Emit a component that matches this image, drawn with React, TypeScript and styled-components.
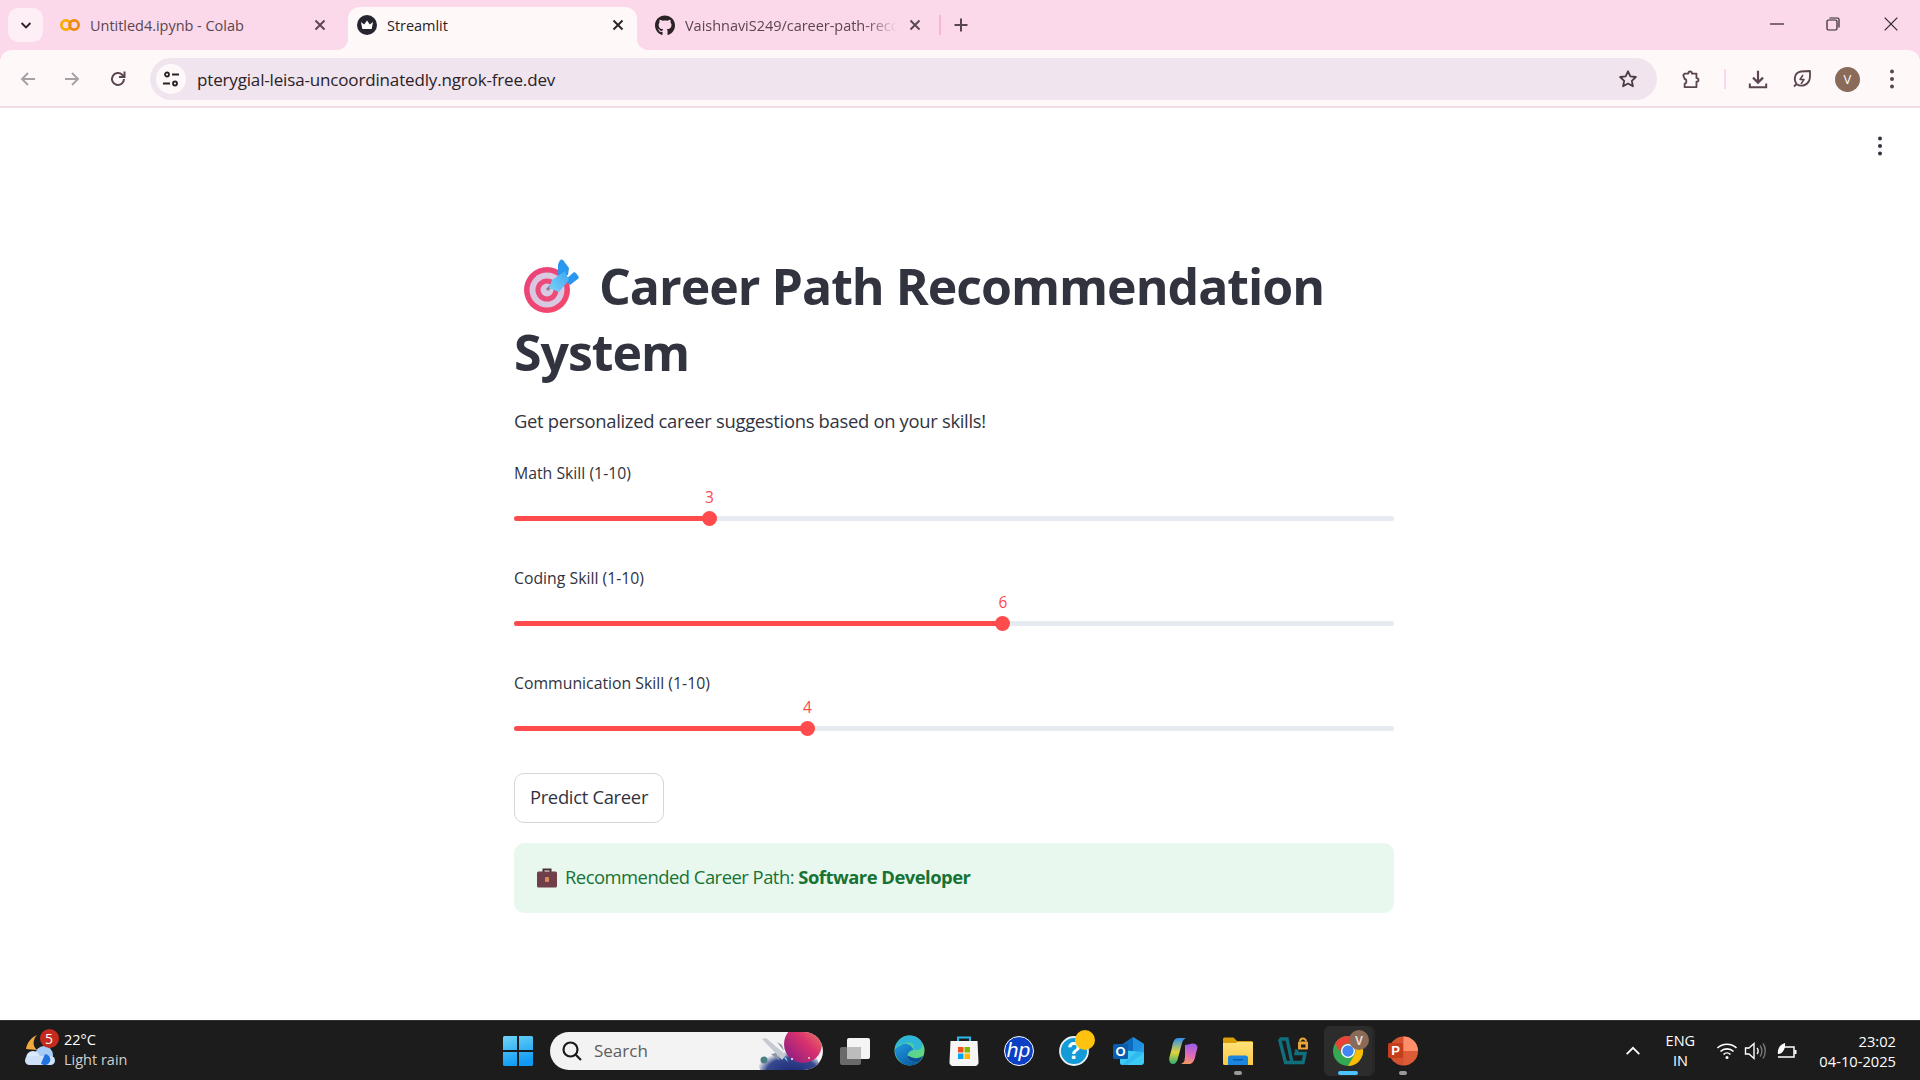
import { FC, ReactNode } from 'react'
import styled, { createGlobalStyle } from 'styled-components'
import { FaGithub } from 'react-icons/fa'

const GlobalStyle = createGlobalStyle`
  html, body {
    margin: 0;
    padding: 0;
    height: 100%;
    overflow: hidden;
    background: #fff;
  }
  * { box-sizing: border-box; }
`

const BODY_FONT = `"Open Sans", "Noto Sans", sans-serif`
const UI_FONT = `"Open Sans", "Noto Sans", sans-serif`

const Screen = styled.div`
  width: 1920px;
  height: 1080px;
  display: flex;
  flex-direction: column;
  overflow: hidden;
  background: #fbd8ea;
  font-family: ${BODY_FONT};
`

/* ---------- browser chrome ---------- */

const TabStrip = styled.div`
  height: 50px;
  flex: none;
  display: flex;
  align-items: flex-end;
  background: #fbd8ea;
  font-family: ${UI_FONT};
`

const TabListButton = styled.div`
  width: 35px;
  height: 34px;
  margin: 0 7px 8px 8px;
  display: flex;
  align-items: center;
  justify-content: center;
  background: #feeef6;
  border-radius: 10px;
`

const Tab = styled.div<{ $width: number; $left: number; $right: number; $active?: boolean }>`
  position: relative;
  width: ${(p) => p.$width}px;
  height: 43px;
  padding: 0 ${(p) => p.$right}px 7px ${(p) => p.$left}px;
  display: flex;
  align-items: center;
  border-radius: 12px 12px 0 0;
  background: ${(p) => (p.$active ? '#fff8f8' : 'transparent')};
  color: ${(p) => (p.$active ? '#2b2226' : '#5a4650')};
  font-size: 14.5px;
  letter-spacing: -0.03px;

  ${(p) =>
    p.$active &&
    `
    &::before, &::after {
      content: '';
      position: absolute;
      bottom: 0;
      width: 12px;
      height: 12px;
    }
    &::before {
      left: -12px;
      background: radial-gradient(circle at 0 0, transparent 12px, #fff8f8 12.5px);
    }
    &::after {
      right: -12px;
      background: radial-gradient(circle at 100% 0, transparent 12px, #fff8f8 12.5px);
    }
  `}
`

const Favicon = styled.span`
  width: 20px;
  height: 20px;
  flex: none;
  display: flex;
  align-items: center;
  justify-content: center;
`

const TabTitle = styled.span<{ $fade?: boolean }>`
  flex: 1;
  min-width: 0;
  margin-left: 10px;
  white-space: nowrap;
  overflow: hidden;
  ${(p) =>
    p.$fade &&
    `
    margin-right: 8px;
    -webkit-mask-image: linear-gradient(to right, #000 85%, transparent 100%);
    mask-image: linear-gradient(to right, #000 85%, transparent 100%);
  `}
`

const TabClose = styled.span`
  width: 20px;
  height: 20px;
  flex: none;
  display: flex;
  align-items: center;
  justify-content: center;
`

const TabDivider = styled.span`
  width: 2px;
  height: 20px;
  margin: 0 0 15px 12px;
  background: #f5b6d4;
`

const NewTab = styled.span`
  width: 20px;
  height: 20px;
  margin: 0 0 15px 10px;
  display: flex;
  align-items: center;
  justify-content: center;
`

const WindowControls = styled.div`
  margin-left: auto;
  height: 50px;
  display: flex;
  align-items: flex-start;
  padding: 14px 19px 0 0;
  gap: 36px;
`

const WindowButton = styled.span<{ $margin?: number }>`
  width: 20px;
  height: 20px;
  margin-left: ${(p) => p.$margin ?? 0}px;
  display: flex;
  align-items: center;
  justify-content: center;
`

const Toolbar = styled.div`
  height: 58px;
  flex: none;
  display: flex;
  align-items: center;
  padding: 2px 18px 0 18px;
  background: #fff8f8;
  border-bottom: 2px solid #f2dbe6;
  border-radius: 12px 12px 0 0;
`

const NavIcon = styled.span<{ $margin?: number }>`
  width: 20px;
  height: 20px;
  flex: none;
  margin-left: ${(p) => p.$margin ?? 0}px;
  display: flex;
  align-items: center;
  justify-content: center;
`

const Omnibox = styled.div`
  width: 1507px;
  height: 42px;
  flex: none;
  margin: 0 0 0 22px;
  padding: 0 19px 0 6px;
  display: flex;
  align-items: center;
  border-radius: 21px;
  background: #f0e4ee;
`

const SiteInfo = styled.span`
  width: 30px;
  height: 30px;
  flex: none;
  border-radius: 50%;
  background: #fff8f8;
  display: flex;
  align-items: center;
  justify-content: center;
`

const Url = styled.span`
  flex: 1;
  margin-left: 11px;
  font-family: ${UI_FONT};
  font-size: 17px;
  letter-spacing: -0.16px;
  color: #2b2226;
`

const ToolbarDivider = styled.span`
  width: 2px;
  height: 20px;
  flex: none;
  margin-left: 23px;
  background: #fbd8ea;
`

const Avatar = styled.span`
  width: 25px;
  height: 25px;
  flex: none;
  margin-left: 23px;
  border-radius: 50%;
  background: #8a6a58;
  color: #fff;
  font-family: ${UI_FONT};
  font-size: 13px;
  display: flex;
  align-items: center;
  justify-content: center;
`

/* ---------- streamlit page ---------- */

const Page = styled.main`
  position: relative;
  flex: 1;
  min-height: 0;
  background: #fff;
  color: #31333f;
`

const PageMenu = styled.span`
  position: absolute;
  top: 28px;
  right: 30px;
  width: 20px;
  height: 20px;
  display: flex;
  align-items: center;
  justify-content: center;
`

const Column = styled.div`
  width: 880px;
  margin: 0 0 0 514px;
  padding-top: 145px;
`

const Title = styled.h1`
  margin: 0;
  font-size: 50px;
  font-weight: 700;
  line-height: 66px;
  letter-spacing: -1px;
  color: #31333f;
`

const TitleEmoji = styled.span`
  display: inline-block;
  width: 58px;
  height: 56px;
  margin: 0 19px 0 8px;
  vertical-align: -9px;

  svg {
    display: block;
  }
`

const Lead = styled.p`
  margin: 20px 0 0;
  font-size: 18.4px;
  line-height: 32px;
  letter-spacing: -0.3px;
`

const SliderList = styled.div`
  margin-top: 23px;
  display: flex;
  flex-direction: column;
  gap: 39px;
`

const Field = styled.div`
  height: 66px;
`

const FieldLabel = styled.div`
  height: 26px;
  font-size: 15.8px;
  line-height: 26px;
`

const TrackArea = styled.div`
  position: relative;
  height: 16px;
  margin-top: 24px;
  display: flex;
  align-items: center;
`

const Track = styled.div`
  width: 100%;
  height: 5px;
  border-radius: 3px;
  background: #e6eaf1;
  overflow: hidden;
`

const TrackFill = styled.div`
  height: 100%;
  background: #ff4b4b;
`

const Thumb = styled.div`
  position: absolute;
  top: 0.5px;
  width: 15px;
  height: 15px;
  margin-left: -7.5px;
  border-radius: 50%;
  background: #ff4b4b;
`

const ThumbValue = styled.div`
  position: absolute;
  top: -23px;
  width: 30px;
  margin-left: -15px;
  text-align: center;
  font-size: 15.5px;
  line-height: 20px;
  color: #ff4b4b;
`

const PredictButton = styled.button`
  display: block;
  width: 150px;
  height: 50px;
  margin-top: 37px;
  padding: 0 0 4px;
  border: 1px solid #d5d6d9;
  border-radius: 10px;
  background: #fff;
  color: #31333f;
  font-family: ${BODY_FONT};
  font-size: 18.4px;
  letter-spacing: -0.3px;
`

const SuccessBox = styled.div`
  height: 70px;
  margin-top: 20px;
  padding: 0 22px;
  display: flex;
  align-items: center;
  gap: 7px;
  border-radius: 10px;
  background: #e8f8ee;
  color: #177233;
  font-size: 18.4px;
  letter-spacing: -0.5px;

  span {
    margin-bottom: 4px;
  }

  strong {
    font-weight: 700;
  }
`

/* ---------- windows taskbar ---------- */

const Taskbar = styled.footer`
  height: 60px;
  flex: none;
  display: flex;
  align-items: center;
  background: #1c1c1c;
  border-top: 1px solid #333;
  color: #fff;
  font-family: ${UI_FONT};
`

const Weather = styled.div`
  width: 503px;
  flex: none;
  padding-left: 24px;
  display: flex;
  align-items: center;
  gap: 8px;
`

const WeatherIcon = styled.span`
  position: relative;
  width: 32px;
  height: 34px;
  display: block;
`

const Badge = styled.span`
  position: absolute;
  top: -5px;
  left: 15.5px;
  width: 19px;
  height: 19px;
  border-radius: 50%;
  background: #c42b1c;
  color: #fff;
  font-size: 14px;
  line-height: 19px;
  text-align: center;
`

const WeatherText = styled.div`
  margin-top: -2px;
  font-size: 14.5px;
  line-height: 20px;

  span {
    display: block;
    color: #cfcfcf;
  }
`

const StartButton = styled.span`
  width: 30px;
  height: 30px;
  flex: none;
  display: block;
`

const SearchBox = styled.div`
  position: relative;
  width: 273px;
  height: 38px;
  flex: none;
  margin-left: 17px;
  padding-left: 11px;
  display: flex;
  align-items: center;
  gap: 11px;
  overflow: hidden;
  border-radius: 19px;
  background: #f3f3f3;
  color: #5d5d5d;
  font-size: 17px;
`

const SearchArt = styled.span`
  position: absolute;
  top: 0;
  right: 0;
  width: 64px;
  height: 38px;
`

const AppIcons = styled.div`
  margin-left: 4.5px;
  display: flex;
  align-items: center;
`

const AppSlot = styled.div<{ $active?: boolean }>`
  position: relative;
  width: 54.8px;
  height: 50px;
  display: flex;
  align-items: center;
  justify-content: center;

  ${(p) =>
    p.$active &&
    `
    &::before {
      content: '';
      position: absolute;
      left: 3px;
      top: 0;
      width: 48px;
      height: 50px;
      border-radius: 6px;
      background: #2c2c2c;
      box-shadow: 3px 0 0 #262626;
    }
  `}

  svg {
    position: relative;
  }
`

const RunningDot = styled.span<{ $active?: boolean }>`
  position: absolute;
  bottom: 1px;
  left: 50%;
  width: ${(p) => (p.$active ? 20 : 8)}px;
  height: 4px;
  margin-left: ${(p) => (p.$active ? -10 : -4)}px;
  border-radius: 2px;
  background: ${(p) => (p.$active ? '#4cc2ff' : '#9a9a9a')};
`

const Tray = styled.div`
  margin-left: auto;
  padding-right: 24px;
  display: flex;
  align-items: center;
`

const TrayIcon = styled.span<{ $margin: number }>`
  width: 22px;
  height: 22px;
  margin-left: ${(p) => p.$margin}px;
  display: flex;
  align-items: center;
  justify-content: center;
`

const Lang = styled.div`
  width: 48px;
  margin-left: 12px;
  text-align: center;
  font-size: 14.5px;
  line-height: 20px;
`

const Clock = styled.div`
  margin-left: 21px;
  text-align: right;
  font-size: 14.7px;
  line-height: 20px;
`

/* ---------- drawn icons ---------- */

const Stroke: FC<{ size?: number; color?: string; width?: number; children: ReactNode }> = ({
  size = 20,
  color = '#5a4650',
  width = 2,
  children,
}) => (
  <svg width={size} height={size} viewBox="0 0 20 20" fill="none" stroke={color} strokeWidth={width}>
    {children}
  </svg>
)

const CloseIcon: FC<{ color?: string }> = ({ color = '#5a4650' }) => (
  <Stroke color={color} width={1.9} size={20}>
    <path d="M5.5 5.5l9 9M14.5 5.5l-9 9" />
  </Stroke>
)

const ColabIcon = () => (
  <svg width="22" height="14" viewBox="0 0 22 14" fill="none" strokeWidth="3">
    <circle cx="6.5" cy="7" r="5" stroke="#f9ab00" />
    <circle cx="15.5" cy="7" r="5" stroke="#f08a0c" />
  </svg>
)

const StreamlitIcon = () => (
  <svg width="20" height="20" viewBox="0 0 20 20">
    <circle cx="10" cy="10" r="10" fill="#25252f" />
    <path d="M4 7l3.2 2.4L10 5.4l2.8 4L16 7l-1.3 7H5.3z" fill="#fff" />
  </svg>
)

const TuneIcon = () => (
  <Stroke size={20} color="#2b2226" width={1.8}>
    <circle cx="6" cy="5.5" r="2" />
    <path d="M11 5.5h7M2 14.5h7" />
    <circle cx="14" cy="14.5" r="2" />
  </Stroke>
)

const PuzzleIcon = () => (
  <svg width="24" height="24" viewBox="0 0 22 22" fill="none" stroke="#5a4650" strokeWidth="2" strokeLinejoin="round">
    <path d="M4 5h4c0-3 4-3 4 0h5v5c3 0 3 4 0 4v6H4v-4c2.5 0 2.5-5 0-5L2.5 7z" />
  </svg>
)

const DownloadIcon = () => (
  <svg width="22" height="22" viewBox="0 0 22 22" fill="none" stroke="#5a4650" strokeWidth="2.4">
    <path d="M11 2v13M5.5 9.5L11 15l5.5-5.5" />
    <path d="M2 16v4h18v-4" strokeWidth="2.2" />
  </svg>
)

const LeafIcon = () => (
  <svg width="20" height="20" viewBox="0 0 20 20" fill="none" stroke="#5a4650" strokeWidth="1.8" strokeLinejoin="round">
    <path d="M2 17.5l2.5-2.5C1 10 3 3.5 9 2.5c3-.5 6.5-.5 9-.5 0 3 .5 7-1 10-2.5 5-8.5 6-12.5 3" />
    <path d="M11 6l-3 4.5h4L9 15" strokeWidth="1.5" />
  </svg>
)

const Dots: FC<{ color: string }> = ({ color }) => (
  <svg width="20" height="20" viewBox="0 0 20 20" fill={color}>
    <circle cx="10" cy="2.5" r="2" />
    <circle cx="10" cy="10" r="2" />
    <circle cx="10" cy="17.5" r="2" />
  </svg>
)

const TargetEmoji = () => (
  <svg width="58" height="56" viewBox="0 0 58 56">
    <defs>
      <linearGradient id="ring" x1="0" y1="0" x2="1" y2="1">
        <stop offset="0" stopColor="#e8437c" />
        <stop offset="1" stopColor="#f5476a" />
      </linearGradient>
      <linearGradient id="dart" x1="0" y1="1" x2="1" y2="0">
        <stop offset="0" stopColor="#7fd2f8" />
        <stop offset="1" stopColor="#3aa6f2" />
      </linearGradient>
    </defs>
    <circle cx="25" cy="32" r="23" fill="url(#ring)" />
    <circle cx="25" cy="32" r="17.5" fill="#d9c8e2" />
    <circle cx="25" cy="32" r="11.5" fill="#ec4a78" />
    <circle cx="25" cy="32" r="6.5" fill="#d9c8e2" />
    <path d="M25 32l6-6" stroke="#8d7f90" strokeWidth="3" />
    <path d="M36 17V7q2-7 5-5l6 8-1 7z" fill="#2a96ee" />
    <path d="M43 22l9-8q3 1 5 6l-9 7z" fill="#2a96ee" />
    <path d="M27 30l3-8 13-9 4 9-10 12z" fill="url(#dart)" />
  </svg>
)

const BriefcaseEmoji = () => (
  <svg width="22" height="22" viewBox="0 0 22 22">
    <path d="M7.5 5V2.5h7V5" fill="none" stroke="#4a3038" strokeWidth="2" />
    <rect x="1" y="4.5" width="20" height="16" rx="1.5" fill="#6f3f4a" />
    <rect x="9" y="10" width="4" height="5" rx="1" fill="#d98a5a" />
  </svg>
)

const WeatherArt = () => (
  <svg width="32" height="34" viewBox="0 0 32 34">
    <path d="M13 1C8 3 3 8 2 15l11 1C8 12 9 5 13 1z" fill="#f2a93b" />
    <circle cx="20" cy="21" r="9" fill="#a8cdf5" />
    <circle cx="9" cy="24" r="7" fill="#dbe9fb" />
    <rect x="1" y="22" width="30" height="9" rx="4.5" fill="#cfe1f8" />
    <path d="M21 20a5.5 5.5 0 1 1-4 9.5z" fill="#1f74e0" />
  </svg>
)

const WindowsLogo = () => (
  <svg width="30" height="30" viewBox="0 0 30 30">
    <defs>
      <linearGradient id="win" x1="0" y1="0" x2="0.3" y2="1">
        <stop offset="0" stopColor="#6fd4f5" />
        <stop offset="1" stopColor="#0f9bf5" />
      </linearGradient>
    </defs>
    <path d="M0 1.5A1.5 1.5 0 0 1 1.5 0H14v14H0zM16 0h12.5A1.5 1.5 0 0 1 30 1.5V14H16zM0 16h14v14H1.5A1.5 1.5 0 0 1 0 28.5zM16 16h14v12.5a1.5 1.5 0 0 1-1.5 1.5H16z" fill="url(#win)" />
  </svg>
)

const SearchGlyph = () => (
  <svg width="22" height="22" viewBox="0 0 22 22" fill="none" stroke="#1c1c1c" strokeWidth="2.2">
    <circle cx="9.5" cy="9.5" r="7" />
    <path d="M14.5 14.5l5.5 5.5" />
  </svg>
)

const SearchArtwork = () => (
  <svg width="64" height="38" viewBox="0 0 64 38">
    <defs>
      <linearGradient id="planet" x1="1" y1="0" x2="0" y2="1">
        <stop offset="0" stopColor="#f08a5a" />
        <stop offset="0.45" stopColor="#d8306f" />
        <stop offset="1" stopColor="#7d1a86" />
      </linearGradient>
      <radialGradient id="sky" cx="0.55" cy="0.7" r="0.6">
        <stop offset="0" stopColor="#1b2a78" />
        <stop offset="0.7" stopColor="#36488e" />
        <stop offset="1" stopColor="#f3f3f3" />
      </radialGradient>
    </defs>
    <ellipse cx="30" cy="33" rx="30" ry="17" fill="url(#sky)" />
    <circle cx="44" cy="12" r="19" fill="url(#planet)" />
    <circle cx="5" cy="28" r="3.5" fill="#4f7f86" />
    <path d="M3 7l4-1 20 17-4 5z" fill="#c5c9d2" />
    <path d="M12 22l5-1 4 8zM18 10l5 3 2 6z" fill="#8f94a1" />
    <path d="M25 26l4 4-2-5z" fill="#7cc6f2" />
    <circle cx="33" cy="27" r="1" fill="#fff" />
    <circle cx="50" cy="26" r="1" fill="#f2d9a0" />
  </svg>
)

const TaskViewIcon = () => (
  <svg width="30" height="30" viewBox="0 0 30 30">
    <rect x="0" y="11" width="21" height="18" rx="2" fill="#6a6a6a" />
    <rect x="7" y="2" width="23" height="21" rx="2" fill="#f4f4f4" />
    <path d="M7 11h14v12H7z" fill="#bcbcbc" />
  </svg>
)

const EdgeIcon = () => (
  <svg width="31" height="31" viewBox="0 0 32 32">
    <defs>
      <linearGradient id="edgeA" x1="0" y1="0" x2="1" y2="1">
        <stop offset="0" stopColor="#37c6d0" />
        <stop offset="1" stopColor="#6fdc6a" />
      </linearGradient>
      <linearGradient id="edgeB" x1="0" y1="0" x2="0.8" y2="1">
        <stop offset="0" stopColor="#1f9be0" />
        <stop offset="1" stopColor="#0c59a4" />
      </linearGradient>
    </defs>
    <circle cx="16" cy="16" r="15.5" fill="url(#edgeA)" />
    <path d="M1 15C2 6 9 .5 16 .5c6 0 11 3 13 8 1 3-1 7-5 7-3 0-4-1-4-2 1-2 0-6-5-6C8 7.5 1 12 1 15z" fill="#2fb5d8" />
    <path d="M1 15c0 9 7 16.5 15 16.5 4 0 8-1.5 10-4-6 2-12-1-12-6 0-3 3-6 6-6-2-6-9-8-13-5-3 1.5-5 3-6 4.5z" fill="url(#edgeB)" />
    <path d="M14 21.5c0 5 6 8 12 6 2-2 3-3 4-6-3 2-7 3-10 2-3-.5-5-2-6-2z" fill="#0c4f96" />
  </svg>
)

const StoreIcon = () => (
  <svg width="30" height="30" viewBox="0 0 30 30">
    <path d="M9 6V1.500h12V6" fill="none" stroke="#2fb8ec" strokeWidth="2" />
    <path d="M1.5 5h27l1 21a3.5 3.5 0 0 1-3.5 4H4a3.5 3.5 0 0 1-3.5-4z" fill="#f6f6f6" />
    <rect x="9" y="11" width="5.5" height="5.5" fill="#f25022" />
    <rect x="15.5" y="11" width="5.5" height="5.5" fill="#7fba00" />
    <rect x="9" y="17.5" width="5.5" height="5.5" fill="#00a4ef" />
    <rect x="15.5" y="17.5" width="5.5" height="5.5" fill="#ffb900" />
  </svg>
)

const HpIcon = () => (
  <svg width="30" height="30" viewBox="0 0 30 30">
    <circle cx="15" cy="15" r="14.5" fill="#0b3fc4" stroke="#fff" strokeWidth="1" />
    <text x="14.5" y="21" textAnchor="middle" fill="#fff" fontFamily="Liberation Sans, sans-serif" fontSize="21" fontStyle="italic">
      hp
    </text>
  </svg>
)

const HelpIcon = () => (
  <svg width="42" height="42" viewBox="-6 3 42 42">
    <circle cx="15" cy="24" r="14" fill="#149ad6" stroke="#e8f4fa" strokeWidth="1.8" />
    <text x="15" y="32" textAnchor="middle" fill="#fff" fontFamily="Liberation Sans, sans-serif" fontSize="23" fontWeight="700">
      ?
    </text>
    <circle cx="26" cy="13" r="10" fill="#ffc20e" />
  </svg>
)

const OutlookIcon = () => (
  <svg width="32" height="28" viewBox="0 0 32 28">
    <path d="M8 8l12-8 11 7v12H8z" fill="#0f6cbd" />
    <path d="M20 0l11 7v8H20z" fill="#1f8fe0" />
    <path d="M7 13l24 2v10a3 3 0 0 1-3 3H9a2 2 0 0 1-2-2z" fill="#3ccbf4" />
    <path d="M31 8v8L14 28H9z" fill="#28a8ea" opacity="0.5" />
    <rect x="0" y="7" width="15" height="15" rx="1.5" fill="#0b5cad" />
    <text x="7.5" y="19" textAnchor="middle" fill="#fff" fontFamily="Liberation Sans, sans-serif" fontSize="13" fontWeight="700">
      O
    </text>
  </svg>
)

const CopilotIcon = () => (
  <svg width="29" height="28" viewBox="0 0 29 28">
    <defs>
      <linearGradient id="copA" x1="0.4" y1="0" x2="0.4" y2="1">
        <stop offset="0" stopColor="#2a8ff0" />
        <stop offset="0.55" stopColor="#e5d53a" />
        <stop offset="1" stopColor="#2fae72" />
      </linearGradient>
      <linearGradient id="copB" x1="0.6" y1="0" x2="0.5" y2="1">
        <stop offset="0" stopColor="#9a5ce8" />
        <stop offset="0.6" stopColor="#e26ab6" />
        <stop offset="1" stopColor="#f59a62" />
      </linearGradient>
    </defs>
    <path d="M9 1h8c-2.5 1-3.5 3-4 5l-4 15c-1 4-2.5 6-5 6-3 0-4.5-3.5-3.500-7 1-4 1.500-5 2.500-10C4 4 6 1 9 1z" fill="url(#copA)" />
    <path d="M20 27h-8c2.500-1 3.500-3 4-5l3.500-14c3-2.500 9-2 9 2.500-.5 2.500-1.500 5-2 8-1 6-3.500 8.500-6.500 8.500z" fill="url(#copB)" />
    <path d="M16 8l6-1-4 14-5 3c2-1 3-2 3-4z" fill="url(#copB)" />
  </svg>
)

const ExplorerIcon = () => (
  <svg width="30" height="28" viewBox="0 0 30 28">
    <defs>
      <linearGradient id="folder" x1="0" y1="0" x2="0" y2="1">
        <stop offset="0" stopColor="#ffe27a" />
        <stop offset="1" stopColor="#fbc940" />
      </linearGradient>
    </defs>
    <path d="M0 2A1.5 1.5 0 0 1 1.5.5h9L14 4h14.5A1.5 1.5 0 0 1 30 5.5V10H0z" fill="#d99e0a" />
    <path d="M0 6h12.5L15 5h15v23H1.5A1.5 1.5 0 0 1 0 26.5z" fill="url(#folder)" />
    <path d="M5 28v-7a2.5 2.5 0 0 1 2.5-2.5h15A2.5 2.5 0 0 1 25 21v7z" fill="#1a86e0" />
    <rect x="10" y="22" width="10" height="1.5" fill="#0b5cad" />
  </svg>
)

const VsIcon = () => (
  <svg width="30" height="28" viewBox="0 0 30 28" fill="none">
    <path d="M1.5 2h7.500l5 23.500h11l2-9h-9l1-4" stroke="#0f6f7d" strokeWidth="3.4" />
    <path d="M1.5 2l6 23.500h6.500" stroke="#0f6f7d" strokeWidth="3.4" />
    <rect x="20" y="4.5" width="10" height="8" rx="1" fill="#e8a53a" />
    <path d="M22 4.5a3 3 0 0 1 6 0" stroke="#e8a53a" strokeWidth="2" />
    <rect x="23" y="7.5" width="4.5" height="3" fill="#1c1c1c" />
  </svg>
)

const ChromeIcon = () => (
  <svg width="42" height="42" viewBox="-6 0 42 42">
    <circle cx="15" cy="21" r="15" fill="#34a853" />
    <path d="M15 6a15 15 0 0 1 13 7.5H15a7.5 7.5 0 0 0-6.500 11.300L2 13.500A15 15 0 0 1 15 6z" fill="#ea4335" />
    <path d="M28 13.500A15 15 0 0 1 15 36l6.500-11.200A7.500 7.500 0 0 0 15 13.500z" fill="#fbbc04" />
    <circle cx="15" cy="21" r="7" fill="#fff" />
    <circle cx="15" cy="21" r="5.7" fill="#4285f4" />
    <circle cx="26" cy="10" r="10" fill="#8a6a58" />
    <text x="26" y="14.5" textAnchor="middle" fill="#e8ded8" fontFamily="Liberation Sans, sans-serif" fontSize="12" fontWeight="700">
      V
    </text>
  </svg>
)

const PowerPointIcon = () => (
  <svg width="30" height="30" viewBox="0 0 30 30">
    <circle cx="15.5" cy="15" r="14.5" fill="#d35230" />
    <path d="M15.5.5A14.500 14.500 0 0 1 30 15H15.500z" fill="#ff8f6b" />
    <path d="M30 15a14.500 14.500 0 0 1-14.500 14.500V15z" fill="#ed6c47" opacity="0.4" />
    <rect x="0" y="7" width="15" height="15" rx="1.5" fill="#c43e1c" />
    <text x="7.5" y="19" textAnchor="middle" fill="#fff" fontFamily="Liberation Sans, sans-serif" fontSize="13" fontWeight="700">
      P
    </text>
  </svg>
)

const WifiIcon = () => (
  <svg width="22" height="22" viewBox="0 0 22 22" fill="none" stroke="#fff" strokeWidth="1.6">
    <path d="M1.5 8c5-5 14-5 19 0M4.500 11.500c3.500-3.500 9.500-3.500 13 0M7.500 14.500c2-2 5-2 7 0" />
    <circle cx="11" cy="17.5" r="1.5" fill="#fff" stroke="none" />
  </svg>
)

const VolumeIcon = () => (
  <svg width="22" height="22" viewBox="0 0 22 22" fill="none" stroke="#fff" strokeWidth="1.4">
    <path d="M1.5 8h3.500l5-4.500v15L5 14H1.500z" />
    <path d="M13 8c1.500 1.500 1.500 4.500 0 6" />
    <path d="M16 5.500c2.500 3 2.500 8 0 11M19 3.500c3 4 3 11 0 15" stroke="#777" />
  </svg>
)

const BatteryIcon = () => (
  <svg width="22" height="22" viewBox="0 0 22 22" fill="none" stroke="#fff" strokeWidth="1.5">
    <path d="M7 7h11v10H2" />
    <path d="M19.5 10v4" strokeWidth="2" />
    <path d="M2 14c-1-6 3-10 7-11 .5 4-1 10-6 11z" fill="#fff" stroke="none" />
  </svg>
)

/* ---------- data ---------- */

const MIN = 1
const MAX = 10

const skills = [
  { label: 'Math Skill (1-10)', value: 3 },
  { label: 'Coding Skill (1-10)', value: 6 },
  { label: 'Communication Skill (1-10)', value: 4 },
]

const SkillSlider: FC<{ label: string; value: number }> = ({ label, value }) => {
  const percent = ((value - MIN) / (MAX - MIN)) * 100
  return (
    <Field>
      <FieldLabel>{label}</FieldLabel>
      <TrackArea>
        <Track>
          <TrackFill style={{ width: `${percent}%` }} />
        </Track>
        <ThumbValue style={{ left: `${percent}%` }}>{value}</ThumbValue>
        <Thumb style={{ left: `${percent}%` }} />
      </TrackArea>
    </Field>
  )
}

const App: FC = () => {
  return (
    <Screen>
      <GlobalStyle />

      <TabStrip>
        <TabListButton>
          <Stroke size={16} color="#2b2226" width={2.4}>
            <path d="M4.5 7.5L10 13l5.5-5.5" />
          </Stroke>
        </TabListButton>
        <Tab $width={298} $left={10} $right={18}>
          <Favicon>
            <ColabIcon />
          </Favicon>
          <TabTitle>Untitled4.ipynb - Colab</TabTitle>
          <TabClose>
            <CloseIcon />
          </TabClose>
        </Tab>
        <Tab $width={289} $left={9} $right={9} $active>
          <Favicon>
            <StreamlitIcon />
          </Favicon>
          <TabTitle>Streamlit</TabTitle>
          <TabClose>
            <CloseIcon color="#2b2226" />
          </TabClose>
        </Tab>
        <Tab $width={290} $left={18} $right={2}>
          <Favicon>
            <FaGithub size={21} color="#2b2226" />
          </Favicon>
          <TabTitle $fade>VaishnaviS249/career-path-recommendation</TabTitle>
          <TabClose>
            <CloseIcon />
          </TabClose>
        </Tab>
        <TabDivider />
        <NewTab>
          <Stroke size={20} color="#5a4650" width={2}>
            <path d="M10 3.5v13M3.5 10h13" />
          </Stroke>
        </NewTab>
        <WindowControls>
          <WindowButton>
            <svg width="14" height="2" viewBox="0 0 14 2">
              <path d="M0 1h14" stroke="#2b2226" strokeWidth="1.2" />
            </svg>
          </WindowButton>
          <WindowButton>
            <svg width="14" height="14" viewBox="0 0 14 14" fill="none" stroke="#2b2226" strokeWidth="1.2">
              <rect x="1" y="3" width="10" height="10" rx="1.5" />
              <path d="M3.5 1h8a1.5 1.5 0 0 1 1.5 1.5v8" />
            </svg>
          </WindowButton>
          <WindowButton $margin={2}>
            <Stroke size={18} color="#2b2226" width={1.3}>
              <path d="M3 3l14 14M17 3L3 17" />
            </Stroke>
          </WindowButton>
        </WindowControls>
      </TabStrip>

      <Toolbar>
        <NavIcon>
          <Stroke color="#a8a0a4" width={1.9}>
            <path d="M17 10H4M10 4l-6 6 6 6" />
          </Stroke>
        </NavIcon>
        <NavIcon $margin={24}>
          <Stroke color="#a8a0a4" width={1.9}>
            <path d="M3 10h13M10 4l6 6-6 6" />
          </Stroke>
        </NavIcon>
        <NavIcon $margin={26}>
          <Stroke color="#5a4650" width={2}>
            <path d="M16 10a6 6 0 1 1-1.8-4.3L16 7.500" />
            <path d="M16.5 2.5v5.5H11" />
          </Stroke>
        </NavIcon>
        <Omnibox>
          <SiteInfo>
            <TuneIcon />
          </SiteInfo>
          <Url>pterygial-leisa-uncoordinatedly.ngrok-free.dev</Url>
          <NavIcon>
            <svg width="22" height="22" viewBox="0 0 22 22" fill="none" stroke="#4a3a42" strokeWidth="2" strokeLinejoin="round">
              <path d="M11 2.5l2.6 5.600 6 .7-4.400 4.200 1.200 6L11 16l-5.400 3 1.200-6-4.400-4.200 6-.7z" />
            </svg>
          </NavIcon>
        </Omnibox>
        <NavIcon $margin={24}>
          <PuzzleIcon />
        </NavIcon>
        <ToolbarDivider />
        <NavIcon $margin={22}>
          <DownloadIcon />
        </NavIcon>
        <NavIcon $margin={24}>
          <LeafIcon />
        </NavIcon>
        <Avatar>V</Avatar>
        <NavIcon $margin={22}>
          <Dots color="#5a4650" />
        </NavIcon>
      </Toolbar>

      <Page>
        <PageMenu>
          <Dots color="#31333f" />
        </PageMenu>
        <Column>
          <Title>
            <TitleEmoji>
              <TargetEmoji />
            </TitleEmoji>
            Career Path Recommendation System
          </Title>
          <Lead>Get personalized career suggestions based on your skills!</Lead>
          <SliderList>
            {skills.map((s) => (
              <SkillSlider key={s.label} label={s.label} value={s.value} />
            ))}
          </SliderList>
          <PredictButton>Predict Career</PredictButton>
          <SuccessBox>
            <BriefcaseEmoji />
            <span>
              Recommended Career Path: <strong>Software Developer</strong>
            </span>
          </SuccessBox>
        </Column>
      </Page>

      <Taskbar>
        <Weather>
          <WeatherIcon>
            <WeatherArt />
            <Badge>5</Badge>
          </WeatherIcon>
          <WeatherText>
            22°C
            <span>Light rain</span>
          </WeatherText>
        </Weather>
        <StartButton>
          <WindowsLogo />
        </StartButton>
        <SearchBox>
          <SearchGlyph />
          Search
          <SearchArt>
            <SearchArtwork />
          </SearchArt>
        </SearchBox>
        <AppIcons>
          <AppSlot>
            <TaskViewIcon />
          </AppSlot>
          <AppSlot>
            <EdgeIcon />
          </AppSlot>
          <AppSlot>
            <StoreIcon />
          </AppSlot>
          <AppSlot>
            <HpIcon />
          </AppSlot>
          <AppSlot>
            <HelpIcon />
          </AppSlot>
          <AppSlot>
            <OutlookIcon />
          </AppSlot>
          <AppSlot>
            <CopilotIcon />
          </AppSlot>
          <AppSlot>
            <ExplorerIcon />
            <RunningDot />
          </AppSlot>
          <AppSlot>
            <VsIcon />
          </AppSlot>
          <AppSlot $active>
            <ChromeIcon />
            <RunningDot $active />
          </AppSlot>
          <AppSlot>
            <PowerPointIcon />
            <RunningDot />
          </AppSlot>
        </AppIcons>
        <Tray>
          <TrayIcon $margin={0}>
            <Stroke size={18} color="#fff" width={2}>
              <path d="M3 13.5L10 6.5l7 7" />
            </Stroke>
          </TrayIcon>
          <Lang>
            ENG
            <br />
            IN
          </Lang>
          <TrayIcon $margin={12}>
            <WifiIcon />
          </TrayIcon>
          <TrayIcon $margin={6}>
            <VolumeIcon />
          </TrayIcon>
          <TrayIcon $margin={10}>
            <BatteryIcon />
          </TrayIcon>
          <Clock>
            23:02
            <br />
            04-10-2025
          </Clock>
        </Tray>
      </Taskbar>
    </Screen>
  )
}

export default App
